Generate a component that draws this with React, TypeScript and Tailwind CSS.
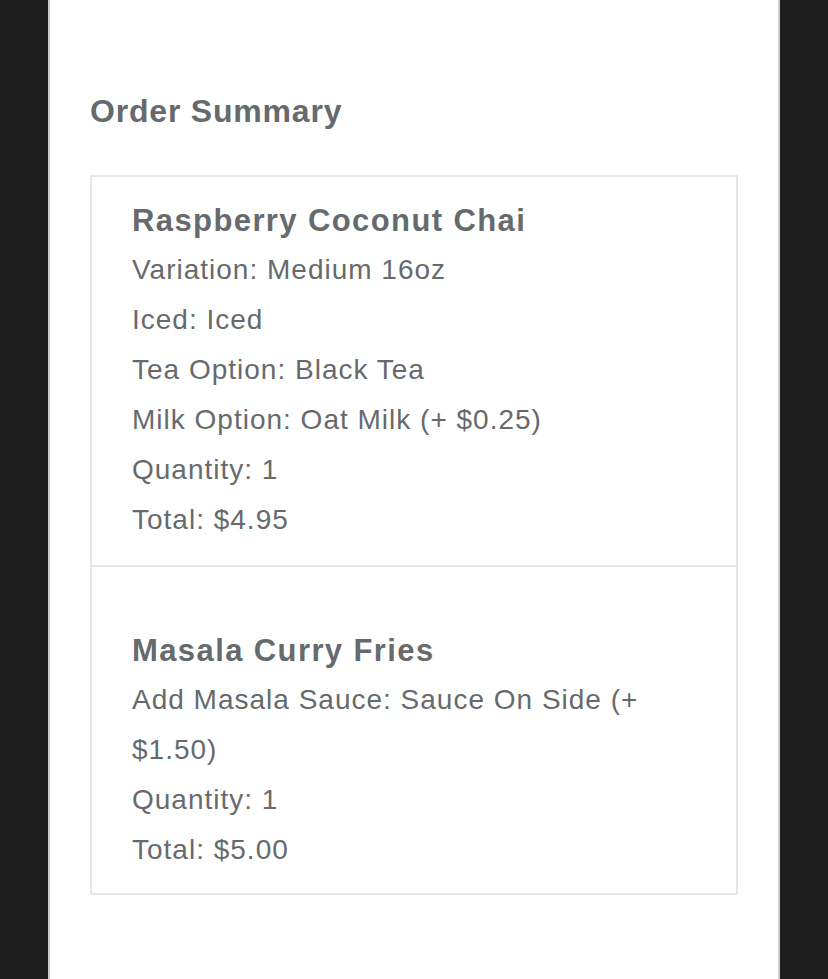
import React from 'react';

type OrderItem = {
  name: string;
  lines: string[];
};

const items: OrderItem[] = [
  {
    name: 'Raspberry Coconut Chai',
    lines: [
      'Variation: Medium 16oz',
      'Iced: Iced',
      'Tea Option: Black Tea',
      'Milk Option: Oat Milk (+ $0.25)',
      'Quantity: 1',
      'Total: $4.95'
    ]
  },
  {
    name: 'Masala Curry Fries',
    lines: ['Add Masala Sauce: Sauce On Side (+ $1.50)', 'Quantity: 1', 'Total: $5.00']
  }
];

const App = () => {
  return (
    <div
      className="min-h-screen bg-[#1e1e1f] pl-[48px] text-[#676a6d]"
      style={{ fontFamily: '"Liberation Sans", Arial, sans-serif' }}
    >
      <div className="min-h-screen w-[732px] border-x-2 border-[#cdcdcd] bg-white px-10 pt-[91px]">
        <h2 className="text-[32px] font-bold leading-[40px] tracking-[0.8px]">Order Summary</h2>

        <div className="mt-[44px] border-2 border-[#e6e6e6]">
          {items.map((item, index) => (
            <div
              key={index}
              className={
                index === 0
                  ? 'px-10 pt-[20px] pb-[20px]'
                  : 'border-t-2 border-[#e6e6e6] px-10 pt-[60px] pb-[18px]'
              }
            >
              <div className="text-[31px] font-bold leading-[48px] tracking-[1.4px]">{item.name}</div>
              {item.lines.map((line, i) => (
                <div key={i} className="text-[28px] leading-[50px] tracking-[1px]">
                  {line}
                </div>
              ))}
            </div>
          ))}
        </div>
      </div>
    </div>
  );
};

export default App;
